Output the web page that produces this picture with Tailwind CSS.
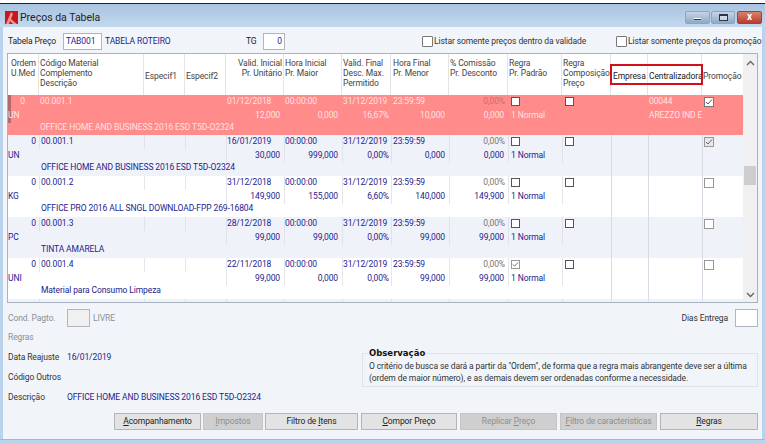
<!DOCTYPE html>
<html><head><meta charset="utf-8"><script src="https://cdn.jsdelivr.net/npm/@tailwindcss/browser@4"></script></head>
<body class="m-0 overflow-hidden bg-white">
<div class="w-[765px] h-[444px] flex flex-col font-['Roboto',sans-serif] text-[8.5px] tracking-[-0.1px] leading-[13px] text-[#333] overflow-hidden">
  <!-- title bar -->
  <div class="h-[3px] bg-white shrink-0"></div>
  <div class="h-[24px] shrink-0 border-t border-[#222] bg-gradient-to-b from-[#a9c4e0] to-[#c3d9ee] flex items-center pl-[5px] pr-[3px] pt-[3px]">
    <svg class="w-[13px] h-[13px] mr-[2px]" viewBox="0 0 13 13"><rect width="13" height="13" fill="#c8161c"/><path d="M1 13 L6 1 L8 3 L6 8 L12 13 L8 13 L5 10 L4 13Z" fill="#f3a0a0" opacity=".9"/></svg>
    <span class="text-[10.5px] tracking-normal text-[#222]">Preços da Tabela</span>
    <div class="ml-auto flex h-[13px] gap-[1px]">
      <div class="w-[25px] bg-gradient-to-b from-[#c5d5e8] to-[#8fa9c6] border border-[#8fa3bb] rounded-[2px] flex items-center justify-center"><div class="w-[7px] h-[2px] mt-[4px] bg-[#fff] border-b border-[#334]"></div></div>
      <div class="w-[24px] bg-gradient-to-b from-[#c5d5e8] to-[#8fa9c6] border border-[#8fa3bb] rounded-[2px] flex items-center justify-center"><div class="w-[9px] h-[7px] border border-[#334] border-t-2 bg-white/40"></div></div>
      <div class="w-[25px] ml-[1px] bg-gradient-to-b from-[#d9806a] to-[#b93a2c] border border-[#8a4a40] rounded-[2px] flex items-center justify-center text-white text-[10px] font-bold leading-none pb-[1px]">x</div>
    </div>
  </div>
  <div class="flex-1 min-h-0 flex bg-[#b9d3ec]">
    <div class="w-[3px] shrink-0"></div>
    <div class="flex-1 min-w-0 bg-[#f1f5fa] flex flex-col pl-[4px] pr-[4px]">
      <!-- filters -->
      <div class="h-[26px] shrink-0 flex items-center whitespace-nowrap pt-[2px]">
        <span class="ml-[1px] w-[55px] shrink-0 text-[#222]">Tabela Preço</span>
        <div class="w-[39px] h-[17px] shrink-0 bg-white border border-[#aeb6c0] text-[#1c1c8c] pl-[2px] leading-[15px]">TAB001</div>
        <span class="ml-[3px] w-[141px] shrink-0 text-[#1c1c8c]">TABELA ROTEIRO</span>
        <span class="w-[17px] shrink-0 text-[#222]">TG</span>
        <div class="w-[22px] h-[17px] shrink-0 bg-white border border-[#aeb6c0] text-right pr-[2px] leading-[15px] text-[#1c1c8c]">0</div>
        <div class="ml-[137px] w-[11px] h-[11px] shrink-0 border border-[#777] bg-white rounded-[1px]"></div>
        <span class="ml-[1px] w-[182px] shrink-0 text-[#333]">Listar somente preços dentro da validade</span>
        <div class="w-[11px] h-[11px] shrink-0 border border-[#777] bg-white rounded-[1px]"></div>
        <span class="ml-[1px] text-[#333]">Listar somente preços da promoção</span>
      </div>
      <!-- table -->
      <div class="w-[751px] h-[250px] shrink-0 border border-[#a9b3bf] bg-white flex relative overflow-hidden">
        <div class="w-[735px] shrink-0 flex flex-col">
          <!-- header -->
          <div class="h-[41px] shrink-0 grid grid-cols-[31px_105px_41px_41px_58px_58px_49px_58px_59px_54px_49px_37px_54px_41px] leading-[10px] text-[#444]">
            <div class="border-r border-[#e4e4e4] pt-[4px] pl-[3px] whitespace-nowrap">Ordem<br>U.Med</div>
            <div class="border-r border-[#e4e4e4] pt-[4px] pl-[1px] whitespace-nowrap">Código Material<br>Complemento<br>Descrição</div>
            <div class="border-r border-[#e4e4e4] flex items-center pl-[1px] pt-[3px]">Especif1</div>
            <div class="border-r border-[#e4e4e4] flex items-center pl-[1px] pt-[3px]">Especif2</div>
            <div class="border-r border-[#e4e4e4] pt-[4px] text-right pr-[1px] whitespace-nowrap">Valid. Inicial<br>Pr. Unitário</div>
            <div class="border-r border-[#e4e4e4] pt-[4px] pl-[1px] whitespace-nowrap">Hora Inicial<br>Pr. Maior</div>
            <div class="border-r border-[#e4e4e4] pt-[4px] pl-[1px] whitespace-nowrap">Valid. Final<br>Desc. Max.<br>Permitido</div>
            <div class="border-r border-[#e4e4e4] pt-[4px] pl-[2px] whitespace-nowrap">Hora Final<br>Pr. Menor</div>
            <div class="border-r border-[#e4e4e4] pt-[4px] pl-[1px] whitespace-nowrap">% Comissão<br>Pr. Desconto</div>
            <div class="border-r border-[#e4e4e4] pt-[4px] pl-[1px] whitespace-nowrap">Regra<br>Pr. Padrão</div>
            <div class="border-r border-[#e4e4e4] pt-[4px] pl-[1px] whitespace-nowrap">Regra<br>Composição<br>Preço</div>
            <div class="border-r border-[#e4e4e4] flex items-center pl-[2px] pt-[3px] text-[#222]">Empresa</div>
            <div class="border-r border-[#e4e4e4] flex items-center pl-[1px] pt-[3px] text-[#222] whitespace-nowrap">Centralizadora</div>
            <div class="flex items-center pl-[1px] pt-[3px]">Promoção</div>
          </div>
          <!-- red row -->
          <div class="h-[40px] shrink-0 bg-[#ff8b8b] text-[#fde3e3] grid grid-cols-[31px_105px_41px_41px_58px_58px_49px_58px_59px_54px_49px_37px_54px_41px] grid-rows-[14px_14px_12px]">
            <div class="row-span-2 border-l-[3px] border-[#b06a6a] flex flex-col"><div class="h-[14px] text-right pr-[14px]">0</div><div class="h-[14px] -ml-[3px]">UN</div></div>
            <div class="row-span-2 pl-[1px]">00.001.1</div>
            <div class="row-span-2"></div><div class="row-span-2"></div>
            <div class="row-span-2 flex flex-col"><div class="h-[14px] pl-[1px]">01/12/2018</div><div class="h-[14px] text-right pr-[4px]">12,000</div></div>
            <div class="row-span-2 flex flex-col"><div class="h-[14px] pl-[1px]">00:00:00</div><div class="h-[14px] text-right pr-[4px]">0,000</div></div>
            <div class="row-span-2 flex flex-col"><div class="h-[14px] pl-[1px]">31/12/2019</div><div class="h-[14px] text-right pr-[2px]">16,67%</div></div>
            <div class="row-span-2 flex flex-col"><div class="h-[14px] pl-[2px]">23:59:59</div><div class="h-[14px] text-right pr-[4px]">10,000</div></div>
            <div class="row-span-2 flex flex-col"><div class="h-[14px] text-right pr-[3px] text-[#c86f6f]">0,00%</div><div class="h-[14px] text-right pr-[4px]">0,000</div></div>
            <div class="row-span-2 flex flex-col pl-[3px]"><div class="h-[14px] pt-[2px]"><div class="w-[9px] h-[9px] border border-[#555] bg-white"></div></div><div class="h-[14px]">1 Normal</div></div>
            <div class="row-span-2 pl-[3px] pt-[2px]"><div class="w-[9px] h-[9px] border border-[#555] bg-white"></div></div>
            <div class="row-span-2"></div>
            <div class="row-span-2 flex flex-col pl-[1px] whitespace-nowrap"><div class="h-[14px]">00044</div><div class="h-[14px]">AREZZO IND E</div></div>
            <div class="row-span-2 pl-[2px] pt-[2px]"><div class="w-[10px] h-[10px] border border-[#777] bg-white flex items-center justify-center"><svg class="w-[8px] h-[8px]" viewBox="0 0 8 8"><path d="M1 4 L3 6 L7 1.5" fill="none" stroke="#555" stroke-width="1"/></svg></div></div>
            <div class="col-start-2 col-span-12 pl-[1px] -mt-[2px] whitespace-nowrap">OFFICE HOME AND BUSINESS 2016 ESD T5D-O2324</div>
          </div>
          <!-- row 1 -->
          <div class="h-[41px] shrink-0 bg-[#f0f2fa] text-[#1c1c8c] grid grid-cols-[31px_105px_41px_41px_58px_58px_49px_58px_59px_54px_49px_37px_54px_41px] grid-rows-[14px_14px_13px]">
            <div class="row-span-2 flex flex-col"><div class="h-[14px] text-right pr-[3px]">0</div><div class="h-[14px]">UN</div></div>
            <div class="h-[14px] border-l border-[#dfe2ec] pl-[1px]">00.001.1</div>
            <div class="h-[14px] col-start-3 border-l border-[#dfe2ec]"></div><div class="h-[14px] border-l border-[#dfe2ec]"></div>
            <div class="row-span-2 flex flex-col border-l border-[#dfe2ec]"><div class="h-[14px]">16/01/2019</div><div class="h-[14px] text-right pr-[4px]">30,000</div></div>
            <div class="row-span-2 flex flex-col border-l border-[#dfe2ec]"><div class="h-[14px]">00:00:00</div><div class="h-[14px] text-right pr-[4px]">999,000</div></div>
            <div class="row-span-2 flex flex-col border-l border-[#dfe2ec]"><div class="h-[14px]">31/12/2019</div><div class="h-[14px] text-right pr-[2px]">0,00%</div></div>
            <div class="row-span-2 flex flex-col border-l border-[#dfe2ec] pl-[1px]"><div class="h-[14px]">23:59:59</div><div class="h-[14px] text-right pr-[4px]">0,000</div></div>
            <div class="row-span-2 flex flex-col border-l border-[#dfe2ec]"><div class="h-[14px] text-right pr-[3px] text-[#777]">0,00%</div><div class="h-[14px] text-right pr-[4px]">0,000</div></div>
            <div class="row-span-2 flex flex-col border-l border-[#dfe2ec] pl-[2px]"><div class="h-[14px] pt-[2px]"><div class="w-[9px] h-[9px] border border-[#555] bg-white"></div></div><div class="h-[14px]">1 Normal</div></div>
            <div class="row-span-2 border-l border-[#dfe2ec] pl-[2px] pt-[2px]"><div class="w-[9px] h-[9px] border border-[#555] bg-white"></div></div>
            <div class="row-span-3 border-l border-[#d8dbe4]"></div>
            <div class="row-span-3 border-l border-[#d8dbe4]"></div>
            <div class="row-span-3 border-l border-[#d8dbe4] pl-[1px] pt-[2px]"><div class="w-[10px] h-[10px] border border-[#999] bg-[#e8e8e8] flex items-center justify-center"><svg class="w-[8px] h-[8px]" viewBox="0 0 8 8"><path d="M1 4 L3 6 L7 1.5" fill="none" stroke="#666" stroke-width="1"/></svg></div></div>
            <div class="col-start-2 col-span-10 row-start-3 pl-[2px] -mt-[2px] whitespace-nowrap">OFFICE HOME AND BUSINESS 2016 ESD T5D-O2324</div>
          </div>
          <!-- row 2 -->
          <div class="h-[41px] shrink-0 bg-white text-[#1c1c8c] grid grid-cols-[31px_105px_41px_41px_58px_58px_49px_58px_59px_54px_49px_37px_54px_41px] grid-rows-[14px_14px_13px]">
            <div class="row-span-2 flex flex-col"><div class="h-[14px] text-right pr-[3px]">0</div><div class="h-[14px]">KG</div></div>
            <div class="h-[14px] border-l border-[#e4e6ee] pl-[1px]">00.001.2</div>
            <div class="h-[14px] col-start-3 border-l border-[#e4e6ee]"></div><div class="h-[14px] border-l border-[#e4e6ee]"></div>
            <div class="row-span-2 flex flex-col border-l border-[#e4e6ee]"><div class="h-[14px]">31/12/2018</div><div class="h-[14px] text-right pr-[4px]">149,900</div></div>
            <div class="row-span-2 flex flex-col border-l border-[#e4e6ee]"><div class="h-[14px]">00:00:00</div><div class="h-[14px] text-right pr-[4px]">155,000</div></div>
            <div class="row-span-2 flex flex-col border-l border-[#e4e6ee]"><div class="h-[14px]">31/12/2019</div><div class="h-[14px] text-right pr-[2px]">6,60%</div></div>
            <div class="row-span-2 flex flex-col border-l border-[#e4e6ee] pl-[1px]"><div class="h-[14px]">23:59:59</div><div class="h-[14px] text-right pr-[4px]">140,000</div></div>
            <div class="row-span-2 flex flex-col border-l border-[#e4e6ee]"><div class="h-[14px] text-right pr-[3px] text-[#777]">0,00%</div><div class="h-[14px] text-right pr-[4px]">149,900</div></div>
            <div class="row-span-2 flex flex-col border-l border-[#e4e6ee] pl-[2px]"><div class="h-[14px] pt-[2px]"><div class="w-[9px] h-[9px] border border-[#555] bg-white"></div></div><div class="h-[14px]">1 Normal</div></div>
            <div class="row-span-2 border-l border-[#e4e6ee] pl-[2px] pt-[2px]"><div class="w-[9px] h-[9px] border border-[#555] bg-white"></div></div>
            <div class="row-span-3 border-l border-[#d8dbe4]"></div>
            <div class="row-span-3 border-l border-[#d8dbe4]"></div>
            <div class="row-span-3 border-l border-[#d8dbe4] pl-[1px] pt-[2px]"><div class="w-[10px] h-[10px] border border-[#999] bg-white"></div></div>
            <div class="col-start-2 col-span-10 row-start-3 pl-[2px] -mt-[2px] whitespace-nowrap">OFFICE PRO 2016 ALL SNGL DOWNLOAD-FPP 269-16804</div>
          </div>
          <!-- row 3 -->
          <div class="h-[41px] shrink-0 bg-[#f0f2fa] text-[#1c1c8c] grid grid-cols-[31px_105px_41px_41px_58px_58px_49px_58px_59px_54px_49px_37px_54px_41px] grid-rows-[14px_14px_13px]">
            <div class="row-span-2 flex flex-col"><div class="h-[14px] text-right pr-[3px]">0</div><div class="h-[14px]">PC</div></div>
            <div class="h-[14px] border-l border-[#dfe2ec] pl-[1px]">00.001.3</div>
            <div class="h-[14px] col-start-3 border-l border-[#dfe2ec]"></div><div class="h-[14px] border-l border-[#dfe2ec]"></div>
            <div class="row-span-2 flex flex-col border-l border-[#dfe2ec]"><div class="h-[14px]">28/12/2018</div><div class="h-[14px] text-right pr-[4px]">99,000</div></div>
            <div class="row-span-2 flex flex-col border-l border-[#dfe2ec]"><div class="h-[14px]">00:00:00</div><div class="h-[14px] text-right pr-[4px]">99,000</div></div>
            <div class="row-span-2 flex flex-col border-l border-[#dfe2ec]"><div class="h-[14px]">31/12/2019</div><div class="h-[14px] text-right pr-[2px]">0,00%</div></div>
            <div class="row-span-2 flex flex-col border-l border-[#dfe2ec] pl-[1px]"><div class="h-[14px]">23:59:59</div><div class="h-[14px] text-right pr-[4px]">99,000</div></div>
            <div class="row-span-2 flex flex-col border-l border-[#dfe2ec]"><div class="h-[14px] text-right pr-[3px] text-[#777]">0,00%</div><div class="h-[14px] text-right pr-[4px]">99,000</div></div>
            <div class="row-span-2 flex flex-col border-l border-[#dfe2ec] pl-[2px]"><div class="h-[14px] pt-[2px]"><div class="w-[9px] h-[9px] border border-[#555] bg-white"></div></div><div class="h-[14px]">1 Normal</div></div>
            <div class="row-span-2 border-l border-[#dfe2ec] pl-[2px] pt-[2px]"><div class="w-[9px] h-[9px] border border-[#555] bg-white"></div></div>
            <div class="row-span-3 border-l border-[#d8dbe4]"></div>
            <div class="row-span-3 border-l border-[#d8dbe4]"></div>
            <div class="row-span-3 border-l border-[#d8dbe4] pl-[1px] pt-[2px]"><div class="w-[10px] h-[10px] border border-[#999] bg-white"></div></div>
            <div class="col-start-2 col-span-10 row-start-3 pl-[2px] -mt-[2px] whitespace-nowrap">TINTA AMARELA</div>
          </div>
          <!-- row 4 -->
          <div class="h-[41px] shrink-0 bg-white text-[#1c1c8c] grid grid-cols-[31px_105px_41px_41px_58px_58px_49px_58px_59px_54px_49px_37px_54px_41px] grid-rows-[14px_14px_13px]">
            <div class="row-span-2 flex flex-col"><div class="h-[14px] text-right pr-[3px]">0</div><div class="h-[14px]">UNI</div></div>
            <div class="h-[14px] border-l border-[#e4e6ee] pl-[1px]">00.001.4</div>
            <div class="h-[14px] col-start-3 border-l border-[#e4e6ee]"></div><div class="h-[14px] border-l border-[#e4e6ee]"></div>
            <div class="row-span-2 flex flex-col border-l border-[#e4e6ee]"><div class="h-[14px]">22/11/2018</div><div class="h-[14px] text-right pr-[4px]">99,000</div></div>
            <div class="row-span-2 flex flex-col border-l border-[#e4e6ee]"><div class="h-[14px]">00:00:00</div><div class="h-[14px] text-right pr-[4px]">0,000</div></div>
            <div class="row-span-2 flex flex-col border-l border-[#e4e6ee]"><div class="h-[14px]">31/12/2019</div><div class="h-[14px] text-right pr-[2px]">0,00%</div></div>
            <div class="row-span-2 flex flex-col border-l border-[#e4e6ee] pl-[1px]"><div class="h-[14px]">23:59:59</div><div class="h-[14px] text-right pr-[4px]">99,000</div></div>
            <div class="row-span-2 flex flex-col border-l border-[#e4e6ee]"><div class="h-[14px] text-right pr-[3px] text-[#777]">0,00%</div><div class="h-[14px] text-right pr-[4px]">99,000</div></div>
            <div class="row-span-2 flex flex-col border-l border-[#e4e6ee] pl-[2px]"><div class="h-[14px] pt-[2px]"><div class="w-[9px] h-[9px] border border-[#999] bg-white flex items-center justify-center"><svg class="w-[7px] h-[7px]" viewBox="0 0 8 8"><path d="M1 4 L3 6 L7 1.5" fill="none" stroke="#666" stroke-width="1"/></svg></div></div><div class="h-[14px]">1 Normal</div></div>
            <div class="row-span-2 border-l border-[#e4e6ee] pl-[2px] pt-[2px]"><div class="w-[9px] h-[9px] border border-[#555] bg-white"></div></div>
            <div class="row-span-3 border-l border-[#d8dbe4]"></div>
            <div class="row-span-3 border-l border-[#d8dbe4]"></div>
            <div class="row-span-3 border-l border-[#d8dbe4] pl-[1px] pt-[2px]"><div class="w-[10px] h-[10px] border border-[#999] bg-white"></div></div>
            <div class="col-start-2 col-span-10 row-start-3 pl-[2px] -mt-[2px] whitespace-nowrap">Material para Consumo Limpeza</div>
          </div>
          <!-- stub -->
          <div class="flex-1 bg-[#f0f2fa] grid grid-cols-[31px_105px_41px_41px_58px_58px_49px_58px_59px_54px_49px_37px_54px_41px]">
            <div></div><div class="border-l border-[#dfe2ec]"></div><div class="border-l border-[#dfe2ec]"></div><div class="border-l border-[#dfe2ec]"></div><div class="border-l border-[#dfe2ec]"></div><div class="border-l border-[#dfe2ec]"></div><div class="border-l border-[#dfe2ec]"></div><div class="border-l border-[#dfe2ec]"></div><div class="border-l border-[#dfe2ec]"></div><div class="border-l border-[#dfe2ec]"></div><div class="border-l border-[#dfe2ec]"></div><div class="border-l border-[#dfe2ec]"></div><div class="border-l border-[#dfe2ec]"></div><div class="border-l border-[#dfe2ec]"></div>
          </div>
        </div>
        <!-- scrollbar -->
        <div class="flex-1 bg-[#f0f0f0] flex flex-col items-center">
          <svg class="w-[9px] h-[6px] mt-[6px] shrink-0" viewBox="0 0 9 6"><path d="M1 5 L4.5 1.5 L8 5" fill="none" stroke="#666" stroke-width="1.4"/></svg>
          <div class="w-[12px] h-[19px] bg-[#cdcdcd] mt-[100px] shrink-0"></div>
          <svg class="w-[9px] h-[6px] mt-auto mb-[4px] shrink-0" viewBox="0 0 9 6"><path d="M1 1 L4.5 4.5 L8 1" fill="none" stroke="#666" stroke-width="1.4"/></svg>
        </div>
        <!-- annotation -->
        <div class="absolute left-[602px] top-[10px] w-[93px] h-[21px] border-2 border-[#d0101a]"></div>
      </div>
      <!-- lower -->
      <div class="h-[26px] mt-[2px] shrink-0 flex items-center whitespace-nowrap">
        <span class="ml-[1px] w-[59px] shrink-0 text-[#8a8f96]">Cond. Pagto.</span>
        <div class="w-[23px] h-[18px] shrink-0 bg-[#f0f0f0] border border-[#aeb6c0]"></div>
        <span class="ml-[3px] text-[#8a8f96]">LIVRE</span>
        <span class="ml-auto mr-[7px] text-[#333]">Dias Entrega</span>
        <div class="w-[23px] h-[18px] shrink-0 bg-white border border-[#aeb6c0]"></div>
      </div>
      <div class="flex-1 min-h-0 flex whitespace-nowrap">
        <div class="w-[355px] shrink-0 flex flex-col pl-[1px] -mt-[4px]">
          <div class="h-[20px] flex items-center text-[#8a8f96]">Regras</div>
          <div class="h-[20px] flex items-center"><span class="w-[59px]">Data Reajuste</span><span class="text-[#1c1c8c]">16/01/2019</span></div>
          <div class="h-[20px] flex items-center">Código Outros</div>
          <div class="h-[20px] flex items-center"><span class="w-[59px]">Descrição</span><span class="text-[#1c1c8c]">OFFICE HOME AND BUSINESS 2016 ESD T5D-O2324</span></div>
        </div>
        <div class="flex-1 pt-[22px]">
          <div class="h-[34px] border border-[#e0e3e8] relative pl-[6px] pt-[6px] text-[#333] leading-[12px]">
            <span class="absolute left-[5px] -top-[6px] bg-[#f1f5fa] px-[1px] font-bold font-['DejaVu_Sans'] text-[8.5px] tracking-normal text-[#111] leading-[11px]">Observação</span>
            O critério de busca se dará a partir da "Ordem", de forma que a regra mais abrangente deve ser a última<br>(ordem de maior número), e as demais devem ser ordenadas conforme a necessidade.
          </div>
        </div>
      </div>
      <div class="h-[17px] shrink-0 mb-[9px] flex justify-end gap-[2px] text-[#222] whitespace-nowrap">
        <button class="w-[87px] bg-[#e3e3e3] border border-[#b4b4b4]"><u>A</u>companhamento</button>
        <button class="w-[60px] bg-[#cfcfcf] border border-[#c4c4c4] text-[#8e8e8e]"><u>I</u>mpostos</button>
        <button class="w-[93px] bg-[#e3e3e3] border border-[#b4b4b4]">Filtro de <u>I</u>tens</button>
        <button class="w-[96px] bg-[#e3e3e3] border border-[#b4b4b4] ml-[1px]"><u>C</u>ompor Preço</button>
        <button class="w-[97px] bg-[#cfcfcf] border border-[#c4c4c4] text-[#8e8e8e] ml-[1px]">Replicar <u>P</u>reço</button>
        <button class="w-[97px] bg-[#cfcfcf] border border-[#c4c4c4] text-[#8e8e8e] ml-[1px]"><u>F</u>iltro de caracteristicas</button>
        <button class="w-[98px] bg-[#e3e3e3] border border-[#b4b4b4] ml-[1px]"><u>R</u>egras</button>
      </div>
    </div>
    <div class="w-[3px] shrink-0"></div>
  </div>
  <div class="h-[5px] shrink-0 bg-[#b9d3ec] border-t border-[#7cc6e6]"></div>
</div>
</body></html>
